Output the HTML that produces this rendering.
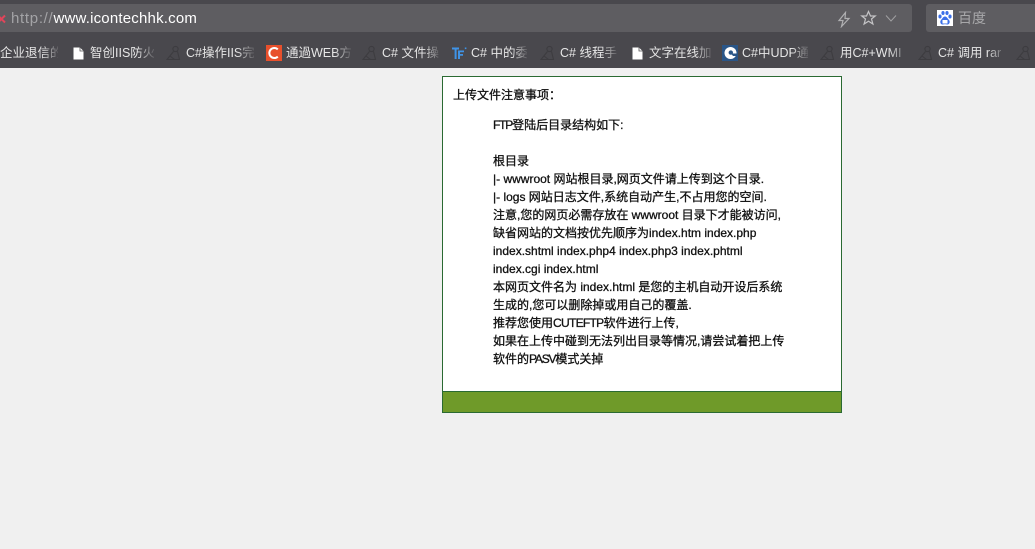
<!DOCTYPE html>
<html><head><meta charset="utf-8">
<style>
*{margin:0;padding:0;box-sizing:border-box}
html,body{width:1035px;height:549px;overflow:hidden;background:#f0f0f0}
body{position:relative;font-family:"Liberation Sans","Noto Sans CJK SC",sans-serif}
.top{position:absolute;left:0;top:0;width:1035px;height:68px;background:#49484d}
.url{position:absolute;left:-6px;top:4px;width:918px;height:28px;background:#5e5d61;border-radius:3px}
.search{position:absolute;left:926px;top:4px;width:120px;height:28px;background:#5e5d61;border-radius:3px}
.abs{position:absolute;white-space:nowrap}
.bm{position:absolute;top:45px;height:16px;line-height:16px;font-size:12.5px;color:#e6e6e6;white-space:nowrap;overflow:hidden;-webkit-mask-image:linear-gradient(to right,#000 74%,rgba(0,0,0,.15) 100%);mask-image:linear-gradient(to right,#000 74%,rgba(0,0,0,.15) 100%)}
.ic{position:absolute}
.box{position:absolute;left:442px;top:76px;width:400px;height:337px;background:#fff;border:1px solid #2a6a32}
.foot{position:absolute;left:443px;top:391px;width:398px;height:21px;background:#6f9a29;border-top:1px solid #2a6a32}
.t{position:absolute;left:493px;font-size:12px;line-height:18px;height:18px;color:#111;white-space:nowrap;font-family:"Liberation Sans","Noto Sans CJK SC",sans-serif;-webkit-text-stroke:.3px #111}
.n{letter-spacing:-1.2px}
.m{letter-spacing:-.7px}
</style></head><body>
<div class="top"></div>
<div class="url"></div>
<div class="search"></div>

<svg class="ic" style="left:0;top:14px" width="6" height="10" viewBox="0 0 6 10"><path d="M-2 1.5L5 8.5M5 1.5L-2 8.5" stroke="#e0455a" stroke-width="2"/></svg>
<div class="abs" style="left:11px;top:9px;font-size:15px;line-height:20px;letter-spacing:.7px;color:#a3a3a6">http://<span style="color:#fff;letter-spacing:.2px">www.icontechhk.com</span></div>

<svg class="ic" style="left:836px;top:11px" width="16" height="17" viewBox="0 0 16 17"><path d="M9.5 1.5L3 9.5H7L5.5 15.5L13 7.5H9Z" fill="none" stroke="#b0b0b2" stroke-width="1.2"/></svg>
<svg class="ic" style="left:860px;top:10px" width="17" height="16" viewBox="0 0 17 16"><path d="M8.5 1.5L10.5 6H15.2L11.5 9L12.9 14L8.5 11.2L4.1 14L5.5 9L1.8 6H6.5Z" fill="none" stroke="#c4c4c6" stroke-width="1.2"/></svg>
<svg class="ic" style="left:885px;top:14px" width="12" height="9" viewBox="0 0 12 9"><path d="M1 1.5L6 7L11 1.5" fill="none" stroke="#a0a0a2" stroke-width="1"/></svg>

<svg class="ic" style="left:937px;top:10px" width="16" height="16" viewBox="0 0 16 16"><rect width="16" height="16" fill="#fff"/><g fill="#3b6fe8"><ellipse cx="3" cy="6.5" rx="1.6" ry="2"/><ellipse cx="6" cy="3" rx="1.6" ry="2"/><ellipse cx="10" cy="3" rx="1.6" ry="2"/><ellipse cx="13" cy="6.5" rx="1.6" ry="2"/><path d="M8 6.5C6 6.5 5.5 8.5 4 10C2.5 11.5 3.5 15 6 14.5C7.5 14.2 8.5 14.2 10 14.5C12.5 15 13.5 11.5 12 10C10.5 8.5 10 6.5 8 6.5Z"/></g><rect x="5.5" y="10" width="5" height="3.5" fill="#fff"/></svg>
<div class="abs" style="left:958px;top:8px;font-size:14px;line-height:20px;color:#a8a8aa">百度</div>

<div class="bm" style="left:0;width:58px">企业退信的</div>

<svg class="ic" style="left:73px;top:47px" width="11" height="13" viewBox="0 0 11 13"><path d="M0.5 0.5H7L10.5 4V12.5H0.5Z" fill="#fff"/><path d="M7 .5V4H10.5" fill="none" stroke="#555" stroke-width=".8"/></svg>
<div class="bm" style="left:90px;width:64px">智创IIS防火</div>

<svg class="ic" style="left:166px;top:45px" width="15" height="16" viewBox="0 0 15 16"><g fill="none" stroke="#3d3c40" stroke-width="1.1"><circle cx="9.5" cy="4" r="2.6"/><path d="M7.5 6.5L1 14.5H13.5L11.5 6.5M4 11L8.5 14.5"/></g></svg>
<div class="bm" style="left:186px;width:68px">C#操作IIS完</div>

<svg class="ic" style="left:266px;top:45px" width="16" height="16" viewBox="0 0 16 16"><rect width="16" height="16" fill="#e8502c"/><path d="M11.8 4.4A5 5 0 1 0 11.8 11.6" fill="none" stroke="#fff" stroke-width="2"/></svg>
<div class="bm" style="left:286px;width:65px">通過WEB方</div>

<svg class="ic" style="left:362px;top:45px" width="15" height="16" viewBox="0 0 15 16"><g fill="none" stroke="#3d3c40" stroke-width="1.1"><circle cx="9.5" cy="4" r="2.6"/><path d="M7.5 6.5L1 14.5H13.5L11.5 6.5M4 11L8.5 14.5"/></g></svg>
<div class="bm" style="left:382px;width:57px">C# 文件操</div>

<svg class="ic" style="left:452px;top:47px" width="15" height="13" viewBox="0 0 15 13"><path d="M0 0.5H7V2.5H4.6V12H2.6V2.5H0Z M6 3.5H12V5.2H8V7H11V8.8H8V12H6Z" fill="#3f93e6"/><rect x="12.8" y=".5" width="1.6" height="1.6" fill="#3f93e6"/></svg>
<div class="bm" style="left:471px;width:56px">C# 中的委</div>

<svg class="ic" style="left:540px;top:45px" width="15" height="16" viewBox="0 0 15 16"><g fill="none" stroke="#3d3c40" stroke-width="1.1"><circle cx="9.5" cy="4" r="2.6"/><path d="M7.5 6.5L1 14.5H13.5L11.5 6.5M4 11L8.5 14.5"/></g></svg>
<div class="bm" style="left:560px;width:57px">C# 线程手</div>

<svg class="ic" style="left:632px;top:47px" width="11" height="13" viewBox="0 0 11 13"><path d="M0.5 0.5H7L10.5 4V12.5H0.5Z" fill="#fff"/><path d="M7 .5V4H10.5" fill="none" stroke="#555" stroke-width=".8"/></svg>
<div class="bm" style="left:649px;width:62px">文字在线加</div>

<svg class="ic" style="left:722px;top:45px" width="16" height="16" viewBox="0 0 16 16"><rect width="16" height="16" fill="#2a5688"/><circle cx="8.5" cy="8" r="6" fill="#fff"/><circle cx="8.8" cy="7.6" r="2.2" fill="#2a5688"/><path d="M9 8.5H15V11H11Z" fill="#2a5688"/></svg>
<div class="bm" style="left:742px;width:66px">C#中UDP通</div>

<svg class="ic" style="left:820px;top:45px" width="15" height="16" viewBox="0 0 15 16"><g fill="none" stroke="#3d3c40" stroke-width="1.1"><circle cx="9.5" cy="4" r="2.6"/><path d="M7.5 6.5L1 14.5H13.5L11.5 6.5M4 11L8.5 14.5"/></g></svg>
<div class="bm" style="left:840px;width:66px">用C#+WMI</div>

<svg class="ic" style="left:918px;top:45px" width="15" height="16" viewBox="0 0 15 16"><g fill="none" stroke="#3d3c40" stroke-width="1.1"><circle cx="9.5" cy="4" r="2.6"/><path d="M7.5 6.5L1 14.5H13.5L11.5 6.5M4 11L8.5 14.5"/></g></svg>
<div class="bm" style="left:938px;width:66px">C# 调用 rar</div>

<svg class="ic" style="left:1016px;top:45px" width="15" height="16" viewBox="0 0 15 16"><g fill="none" stroke="#3d3c40" stroke-width="1.1"><circle cx="9.5" cy="4" r="2.6"/><path d="M7.5 6.5L1 14.5H13.5L11.5 6.5M4 11L8.5 14.5"/></g></svg>

<div class="box"></div>
<div class="foot"></div>

<div class="t" style="left:453px;top:86px">上传文件注意事项：</div>
<div class="t" style="top:116px"><span class="n">FTP</span>登陆后目录结构如下:</div>
<div class="t" style="top:152px">根目录</div>
<div class="t" style="top:170px">|- wwwroot 网站根目录,网页文件请上传到这个目录.</div>
<div class="t" style="top:188px">|- logs 网站日志文件,系统自动产生,不占用您的空间.</div>
<div class="t" style="top:206px">注意,您的网页必需存放在 wwwroot 目录下才能被访问,</div>
<div class="t" style="top:224px">缺省网站的文档按优先顺序为index.htm index.php</div>
<div class="t" style="top:242px">index.shtml index.php4 index.php3 index.phtml</div>
<div class="t" style="top:260px">index.cgi index.html</div>
<div class="t" style="top:278px">本网页文件名为 index.html 是您的主机自动开设后系统</div>
<div class="t" style="top:296px">生成的,您可以删除掉或用自己的覆盖.</div>
<div class="t" style="top:314px">推荐您使用<span class="m">CUTEFTP</span>软件进行上传,</div>
<div class="t" style="top:332px">如果在上传中碰到无法列出目录等情况,请尝试着把上传</div>
<div class="t" style="top:350px">软件的<span class="n">PASV</span>模式关掉</div>
</body></html>
